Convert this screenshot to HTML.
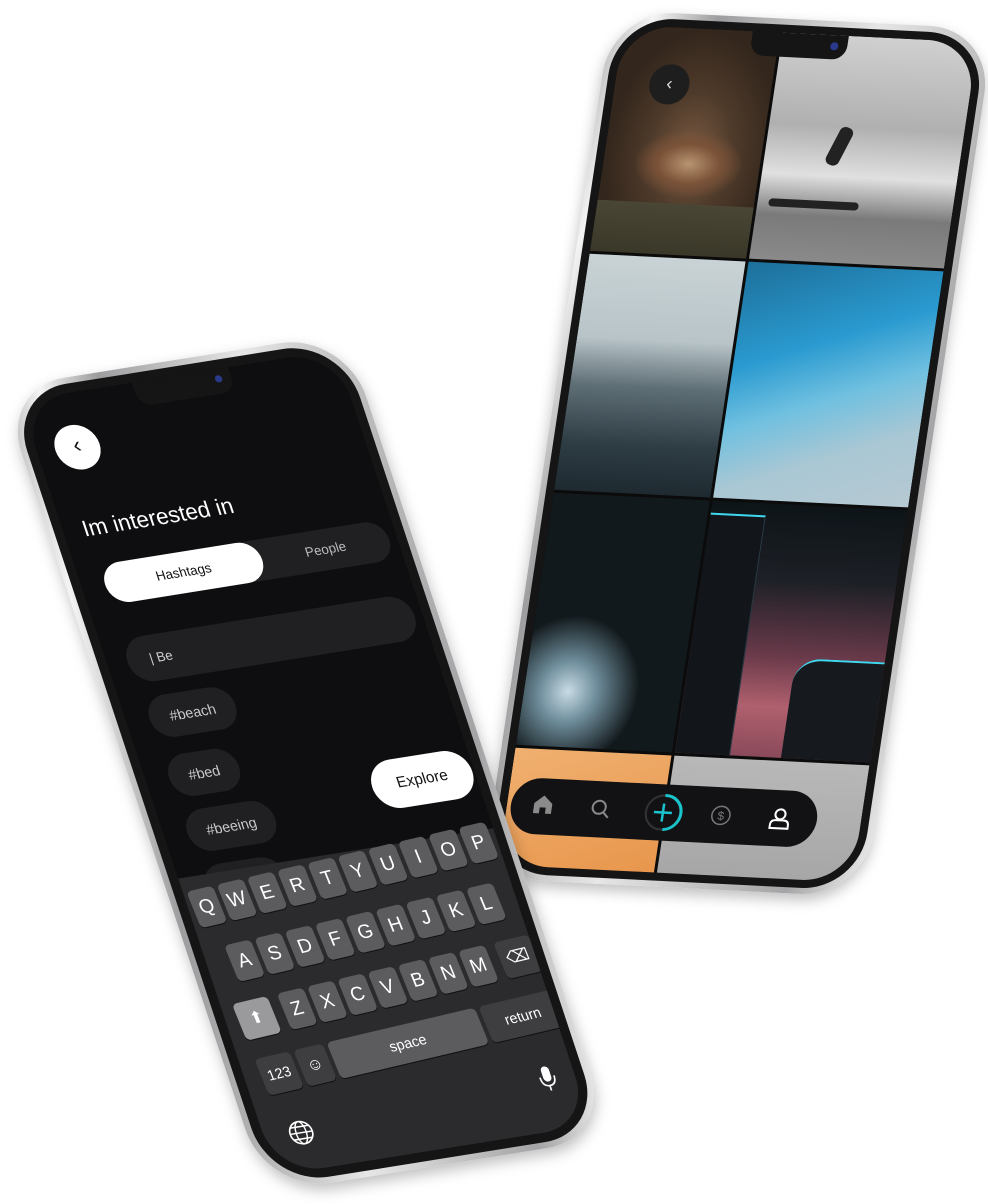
<!DOCTYPE html>
<html><head><meta charset="utf-8"><style>
*{box-sizing:border-box;margin:0;padding:0}
body{width:988px;height:1204px;background:#fff;position:relative;overflow:hidden;font-family:"Liberation Sans",sans-serif}
.ph{position:absolute;left:0;top:0;transform-origin:0 0}
.body{position:absolute;inset:0;border-radius:64px;background:linear-gradient(100deg,#b9b9bb 0%,#f4f4f4 8%,#9d9d9f 20%,#e6e6e6 50%,#a4a4a6 85%,#eeeeee 100%);box-shadow:0 6px 14px rgba(0,0,0,.25)}
.bez{position:absolute;inset:6px;border-radius:58px;background:#151516}
.scr{position:absolute;overflow:hidden}
.notch{position:absolute;top:0;width:96px;height:24px;background:#151516;border-radius:0 0 14px 14px}
.a{position:absolute}
.key{position:absolute;width:27px;height:37px;border-radius:5px;background:#5c5c5f;color:#fff;font-size:19px;text-align:center;line-height:37px;box-shadow:0 1px 0 #111}
.chip{position:absolute;height:42px;border-radius:21px;background:#202023;color:#c8c8c8;font-size:14px;line-height:42px;text-align:center}
</style></head><body>

<!-- RIGHT PHONE -->
<div class="ph" style="width:382px;height:868px;transform:matrix(1,0.05,-0.15,1,612,10)">
 <div class="body"></div>
 <div class="bez"></div>
 <div class="scr" style="left:14px;top:14px;width:354px;height:840px;border-radius:50px;background:#0b0b0b">
  <div class="a" style="left:0;top:0;width:156px;height:226px;background:radial-gradient(ellipse at 55% 55%,#7a5a42 0%,#4e3a2a 35%,#33261c 70%);"></div>
  <div class="a" style="left:30px;top:100px;width:110px;height:70px;background:radial-gradient(ellipse,#b89470 0%,#7a5238 40%,transparent 70%)"></div>
  <div class="a" style="left:0;top:175px;width:156px;height:51px;background:linear-gradient(#4a4636,#3a3828)"></div>
  <div class="a" style="left:159px;top:0;width:195px;height:226px;background:linear-gradient(180deg,#d0d0d0 0%,#b0b0b0 40%,#e0e0e0 62%,#7a7a7a 80%,#8a8a8a 100%)"></div>
  <div class="a" style="left:225px;top:90px;width:14px;height:40px;background:#222;border-radius:6px;transform:rotate(20deg)"></div>
  <div class="a" style="left:170px;top:165px;width:90px;height:8px;background:#222;border-radius:4px"></div>
  <div class="a" style="left:0;top:229px;width:156px;height:236px;background:linear-gradient(180deg,#c9d3d6 0%,#b8c4c8 35%,#5f6f76 55%,#2e3c44 80%,#1e2a30 100%)"></div>
  <div class="a" style="left:159px;top:229px;width:195px;height:236px;background:linear-gradient(160deg,#1d6f9a 0%,#2a9ad0 35%,#6fc0e0 55%,#a9c7d4 75%,#b6c9d2 100%)"></div>
  <div class="a" style="left:0;top:468px;width:156px;height:252px;background:radial-gradient(ellipse 45% 30% at 28% 78%,#c8dbe4 0%,#6f8e9c 40%,#12191c 100%),#050708"></div>
  <div class="a" style="left:159px;top:468px;width:195px;height:252px;background:linear-gradient(180deg,#0d1418 0%,#1d2026 30%,#6a3a4a 60%,#b0606e 80%,#8a4a5a 100%)"></div>
  <div class="a" style="left:159px;top:480px;width:55px;height:240px;background:#12161a;border-top:2px solid #3fd8f0;border-right:1px solid #2a3a44"></div>
  <div class="a" style="left:265px;top:620px;width:89px;height:100px;background:#161a1e;border-top:2px solid #3fd8f0;border-radius:26px 0 0 0"></div>
  <div class="a" style="left:0;top:723px;width:156px;height:120px;background:linear-gradient(160deg,#f0b070,#e8964c)"></div>
  <div class="a" style="left:159px;top:723px;width:195px;height:120px;background:linear-gradient(#b8b8b8,#a6a6a6)"></div>
  <div class="a" style="left:34px;top:37px;width:40px;height:40px;border-radius:50%;background:#1e1e1e;color:#ddd;font-size:18px;text-align:center;line-height:38px">‹</div>
  <div class="notch" style="left:129px"></div>
  <div class="a" style="left:208px;top:7px;width:8px;height:8px;border-radius:50%;background:#2a3a8a"></div>
  <!-- nav -->
  <div class="a" style="left:4px;top:752px;width:306px;height:56px;border-radius:28px;background:#121214">
   <svg class="a" style="left:20px;top:14px" width="24" height="24" viewBox="0 0 24 24"><path d="M3 11 L12 3 L21 11 V21 H15 V15 H9 V21 H3 Z" fill="#8a8a8a"/></svg>
   <svg class="a" style="left:78px;top:16px" width="24" height="24" viewBox="0 0 24 24"><circle cx="10" cy="10" r="6.5" fill="none" stroke="#888" stroke-width="2"/><path d="M15 15 L20 20" stroke="#888" stroke-width="2"/></svg>
   <svg class="a" style="left:132px;top:8px" width="40" height="40" viewBox="0 0 40 40"><circle cx="20" cy="20" r="17" fill="none" stroke="#333" stroke-width="2"/><path d="M20 3 A17 17 0 0 1 22 37" fill="none" stroke="#19c4cc" stroke-width="3"/><path d="M20 11 V29 M11 20 H29" stroke="#19c4cc" stroke-width="2.5"/></svg>
   <svg class="a" style="left:198px;top:16px" width="24" height="24" viewBox="0 0 24 24"><circle cx="12" cy="12" r="9" fill="none" stroke="#777" stroke-width="1.5"/><text x="12" y="16.5" font-size="12" fill="#777" text-anchor="middle" font-family="Liberation Sans">$</text></svg>
   <svg class="a" style="left:256px;top:15px" width="26" height="26" viewBox="0 0 26 26"><circle cx="13" cy="9" r="5" fill="none" stroke="#fff" stroke-width="2"/><path d="M4 23 V20 Q4 15 9 15 H17 Q22 15 22 20 V23 Z" fill="none" stroke="#fff" stroke-width="2"/></svg>
  </div>
 </div>
</div>

<!-- LEFT PHONE -->
<div class="ph" style="width:345px;height:805px;transform:matrix(1,-0.16,0.331,1,0,388)">
 <div class="body"></div>
 <div class="bez"></div>
 <div class="scr" style="left:15px;top:15px;width:315px;height:775px;border-radius:48px;background:#0e0e10">
  <div class="notch" style="left:112px"></div>
  <div class="a" style="left:192px;top:6px;width:7px;height:7px;border-radius:50%;background:#2a3a8a"></div>
  <div class="a" style="left:18px;top:31px;width:44px;height:44px;border-radius:50%;background:#fff;color:#111;font-size:22px;text-align:center;line-height:40px">‹</div>
  <div class="a" style="left:19px;top:119px;color:#fff;font-size:22px;white-space:nowrap">Im interested in</div>
  <div class="a" style="left:23px;top:168px;width:284px;height:40px;border-radius:20px;background:#202023">
   <div class="a" style="left:0;top:0;width:157px;height:40px;border-radius:20px;background:#fff;color:#111;font-size:13px;text-align:center;line-height:40px">Hashtags</div>
   <div class="a" style="left:157px;top:0;width:127px;height:40px;color:#bbb;font-size:13px;text-align:center;line-height:40px">People</div>
  </div>
  <div class="a" style="left:20px;top:242px;width:287px;height:45px;border-radius:22px;background:#202023;color:#ccc;font-size:13px;line-height:45px;padding-left:22px">| Be</div>
  <div class="chip" style="left:23px;top:301px;width:86px">#beach</div>
  <div class="chip" style="left:23px;top:360px;width:70px">#bed</div>
  <div class="chip" style="left:23px;top:415px;width:88px">#beeing</div>
  <div class="chip" style="left:23px;top:470px;width:80px"></div>
  <div class="a" style="left:213px;top:397px;width:100px;height:48px;border-radius:24px;background:#fff;color:#111;font-size:15px;text-align:center;line-height:48px">Explore</div>
  <!-- keyboard -->
  <div class="a" style="left:0;top:478px;width:315px;height:297px;background:#2b2b2d">
   <div class="a" style="left:0;top:0;width:315px;height:230px;transform:rotate(-4deg);transform-origin:0 20px">
   <div class="key" style="left:4px;top:14px">Q</div><div class="key" style="left:35px;top:14px">W</div><div class="key" style="left:66px;top:14px">E</div><div class="key" style="left:97px;top:14px">R</div><div class="key" style="left:128px;top:14px">T</div><div class="key" style="left:159px;top:14px">Y</div><div class="key" style="left:190px;top:14px">U</div><div class="key" style="left:221px;top:14px">I</div><div class="key" style="left:252px;top:14px">O</div><div class="key" style="left:283px;top:14px">P</div>
   <div class="key" style="left:19px;top:72px">A</div><div class="key" style="left:50px;top:72px">S</div><div class="key" style="left:81px;top:72px">D</div><div class="key" style="left:112px;top:72px">F</div><div class="key" style="left:143px;top:72px">G</div><div class="key" style="left:174px;top:72px">H</div><div class="key" style="left:205px;top:72px">J</div><div class="key" style="left:236px;top:72px">K</div><div class="key" style="left:267px;top:72px">L</div>
   <div class="key" style="left:4px;top:128px;width:36px;background:#9a9a9c;font-size:16px">⬆</div>
   <div class="key" style="left:50px;top:128px">Z</div><div class="key" style="left:81px;top:128px">X</div><div class="key" style="left:112px;top:128px">C</div><div class="key" style="left:143px;top:128px">V</div><div class="key" style="left:174px;top:128px">B</div><div class="key" style="left:205px;top:128px">N</div><div class="key" style="left:236px;top:128px">M</div>
   <div class="key" style="left:272px;top:128px;width:36px;background:#3e3e41;font-size:16px">⌫</div>
   <div class="key" style="left:4px;top:184px;width:36px;background:#3e3e41;font-size:14px">123</div>
   <div class="key" style="left:44px;top:184px;width:30px;background:#3e3e41;font-size:16px">☺</div>
   <div class="key" style="left:78px;top:184px;width:152px;font-size:14px">space</div>
   <div class="key" style="left:234px;top:184px;width:76px;background:#3e3e41;font-size:14px">return</div>
   </div>
   <svg class="a" style="left:24px;top:247px" width="26" height="26" viewBox="0 0 26 26"><circle cx="13" cy="13" r="11" fill="none" stroke="#fff" stroke-width="1.6"/><ellipse cx="13" cy="13" rx="5" ry="11" fill="none" stroke="#fff" stroke-width="1.4"/><path d="M2 13 H24 M4 7 H22 M4 19 H22" stroke="#fff" stroke-width="1.4"/></svg>
   <svg class="a" style="left:278px;top:232px" width="20" height="28" viewBox="0 0 20 28"><rect x="6" y="2" width="8" height="15" rx="4" fill="#fff"/><path d="M3 12 Q3 21 10 21 Q17 21 17 12 M10 21 V26" fill="none" stroke="#fff" stroke-width="1.6"/></svg>
  </div>
 </div>
</div>
</body></html>
